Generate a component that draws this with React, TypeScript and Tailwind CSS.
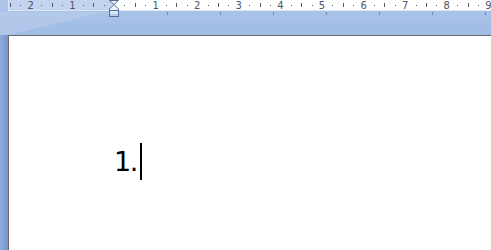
import React from 'react';

// Word-style ruler: 41.6px per unit, left margin (zero point) at x=114
const UNIT = 41.6;
const ZERO = 114;

const Ruler: React.FC = () => {
  const marks: React.ReactNode[] = [];
  for (let q = -11; q <= 36; q++) {
    const x = ZERO + (q * UNIT) / 4;
    if (x < 8 || x > 491 || q === 0) continue;
    const m = ((q % 4) + 4) % 4;
    if (m === 0) {
      marks.push(
        <text key={q} x={x} y={8.5} textAnchor="middle" fontSize="10" fill="#4a5568" fontFamily="'DejaVu Sans', sans-serif">
          {Math.abs(q / 4)}
        </text>
      );
    } else if (m === 2) {
      marks.push(<rect key={q} x={Math.round(x)} y={3} width={1} height={4} fill="#525c6c" />);
    } else {
      marks.push(<rect key={q} x={Math.round(x)} y={5} width={1} height={1} fill="#525c6c" />);
    }
  }
  const tabs = [1, 2, 3, 4, 5, 6, 7].map((k) => ZERO + k * 53);

  return (
    <svg className="absolute left-0 top-0" width={491} height={18} viewBox="0 0 491 18">
      {marks}
      {tabs.map((x) => (
        <rect key={x} x={x} y={12} width={1} height={3} fill="#7488a8" />
      ))}
      {/* indent markers */}
      <path d="M109.5 0.5 H118.5 L114 4.5 Z" fill="#eef3fa" stroke="#55709e" />
      <path d="M114 4.5 L118.5 9 V10.5 H109.5 V9 Z" fill="#eef3fa" stroke="#55709e" />
      <rect x={109.5} y={10.5} width={9} height={6} fill="#dce6f4" stroke="#55709e" />
      <rect x={110} y={14} width={8} height={2} fill="#b7c9e6" />
    </svg>
  );
};

const App: React.FC = () => {
  return (
    <div className="relative flex h-[250px] w-[491px] flex-col overflow-hidden bg-[#a5c0e7] font-['DejaVu_Sans',sans-serif]">
      {/* Ruler strip */}
      <div className="flex h-[11px] shrink-0">
        <div className="w-[8px] bg-[#abc4e8]" />
        <div className="flex flex-1 border-b border-l border-[#dbe5f4]">
          <div className="w-[105px] bg-[#c3d4ee]" />
          <div className="flex-1 bg-white" />
        </div>
      </div>

      {/* Band between ruler and page */}
      <div className="relative h-[24px] shrink-0 bg-gradient-to-b from-[#a9c3e8] to-[#a0bce5]">
        <svg className="absolute left-0 top-0" width={130} height={24} viewBox="0 0 130 24">
          <polygon points="0,1 104,1 8,24 0,24" fill="#b9cdec" opacity="0.6" />
        </svg>
      </div>

      {/* Page area */}
      <div className="flex flex-1">
        <div className="w-[8px] bg-gradient-to-r from-[#8eaedb] to-[#7394c7]" />
        <div className="flex-1 border-l border-t border-[#6b6b6b] bg-white pl-[105px] pt-[107px]">
          <div className="flex h-[37px] items-center text-[27px] leading-[37px] tracking-[-1.5px] text-black">
            <span>1.</span>
            <span className="ml-[3px] h-[37px] w-[2px] bg-black" />
          </div>
        </div>
      </div>

      <Ruler />
    </div>
  );
};

export default App;
